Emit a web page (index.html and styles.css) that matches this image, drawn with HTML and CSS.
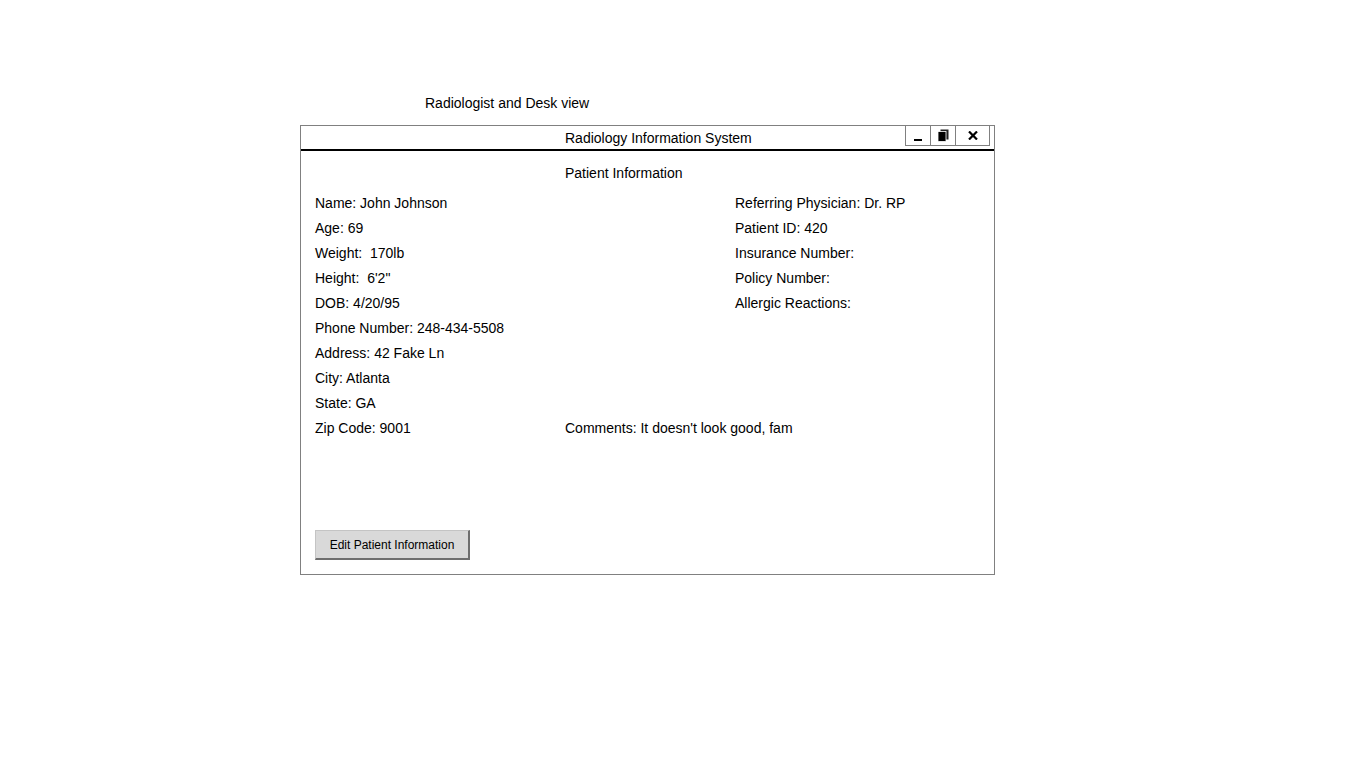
FILE: index.html
```html
<!DOCTYPE html>
<html>
<head>
<meta charset="utf-8">
<title>Radiology Information System</title>
<link rel="stylesheet" href="styles.css">
</head>
<body>
<div class="caption">Radiologist and Desk view</div>
<div class="window">
  <div class="titlebar">
    <span class="title">Radiology Information System</span>
    <div class="controls">
      <div class="ctl"><svg width="12" height="12" viewBox="0 0 12 12"><rect x="2" y="9" width="8" height="2" fill="#000"/></svg></div>
      <div class="ctl"><svg width="12" height="13" viewBox="0 0 12 13"><rect x="3.5" y="0.5" width="8" height="10" fill="#222"/><rect x="1" y="2.5" width="8" height="10" fill="#000" stroke="#fff" stroke-width="0.8"/></svg></div>
      <div class="ctl"><svg width="10" height="9" viewBox="0 0 10 9"><path d="M1 0.5 L9 8.5 M9 0.5 L1 8.5" stroke="#000" stroke-width="2.2"/></svg></div>
    </div>
  </div>
  <div class="content">
    <div class="section-title">Patient Information</div>
    <div class="fields">
      <div class="col-left">
        <div class="row">Name: John Johnson</div>
        <div class="row">Age: 69</div>
        <div class="row">Weight:&nbsp; 170lb</div>
        <div class="row">Height:&nbsp; 6'2"</div>
        <div class="row">DOB: 4/20/95</div>
        <div class="row">Phone Number: 248-434-5508</div>
        <div class="row">Address: 42 Fake Ln</div>
        <div class="row">City: Atlanta</div>
        <div class="row">State: GA</div>
        <div class="row">Zip Code: 9001</div>
      </div>
      <div class="col-right">
        <div class="right-list">
          <div class="row">Referring Physician: Dr. RP</div>
          <div class="row">Patient ID: 420</div>
          <div class="row">Insurance Number:</div>
          <div class="row">Policy Number:</div>
          <div class="row">Allergic Reactions:</div>
        </div>
        <div class="row comments">Comments: It doesn't look good, fam</div>
      </div>
    </div>
    <button class="edit-btn">Edit Patient Information</button>
  </div>
</div>
</body>
</html>
```
FILE: styles.css
```css
html, body {
  margin: 0;
  padding: 0;
  background: #fff;
}
body {
  font-family: "Liberation Sans", Arial, sans-serif;
  font-size: 14px;
  color: #000;
}
.caption {
  padding: 94px 0 0 425px;
  line-height: 18px;
  height: 18px;
  margin-bottom: 13px;
}
.window {
  margin-left: 300px;
  width: 695px;
  height: 450px;
  box-sizing: border-box;
  border: 1px solid #808080;
  display: flex;
  flex-direction: column;
}
.titlebar {
  height: 25px;
  box-sizing: border-box;
  border-bottom: 2px solid #000;
  display: flex;
  align-items: flex-start;
  position: relative;
}
.title {
  padding-left: 264px;
  padding-top: 1px;
  line-height: 23px;
  height: 22px;
}
.controls {
  position: absolute;
  left: 604px;
  top: -1px;
  display: flex;
  border: 1px solid #808080;
  height: 21px;
  box-sizing: border-box;
}
.ctl {
  width: 25px;
  height: 19px;
  display: flex;
  align-items: center;
  justify-content: center;
  border-left: 1px solid #808080;
  box-sizing: border-box;
}
.ctl:first-child {
  border-left: none;
  width: 24px;
}
.ctl:last-child {
  width: 34px;
}
.content {
  padding: 10px 0 0 14px;
  display: flex;
  flex-direction: column;
  align-items: flex-start;
}
.section-title {
  padding-left: 250px;
  line-height: 25px;
  margin-bottom: 5px;
}
.fields {
  display: grid;
  grid-template-columns: 250px 1fr;
  width: 100%;
}
.row {
  line-height: 25px;
  height: 25px;
  white-space: nowrap;
}
.col-right {
  display: flex;
  flex-direction: column;
}
.right-list {
  padding-left: 170px;
}
.comments {
  margin-top: auto;
}
.edit-btn {
  margin-top: 89px;
  width: 155px;
  height: 30px;
  background: #d9d9d9;
  border-style: solid;
  border-width: 1px 2px 2px 1px;
  border-color: #c4c4c4 #6e6e6e #6e6e6e #c4c4c4;
  font-family: "Liberation Sans", Arial, sans-serif;
  font-size: 12px;
  color: #000;
  padding: 0;
  border-radius: 0;
}
```
